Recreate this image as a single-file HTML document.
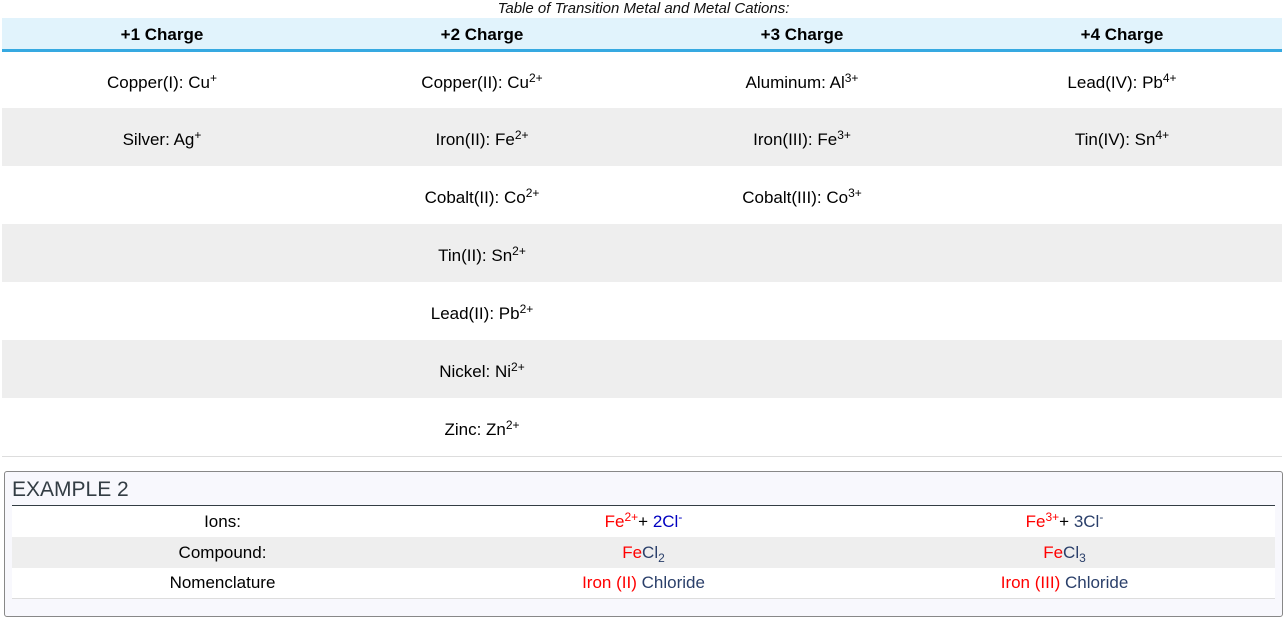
<!DOCTYPE html>
<html><head><style>
body{margin:0;background:#fff;font-family:"Liberation Sans",sans-serif;color:#000;}
.cap{position:absolute;top:0;left:0;width:1287px;text-align:center;font-style:italic;font-size:15px;line-height:18px;color:#111;}
table.t{position:absolute;top:18px;left:2px;width:1280px;border-collapse:collapse;table-layout:fixed;}
.t th{background:#e1f3fc;height:32px;font-size:17px;font-weight:bold;border-bottom:3px solid #36a9e1;padding:3px 0 0 0;box-sizing:border-box;}
.t td{height:58px;text-align:center;font-size:17px;padding:6px 0 0 0;vertical-align:middle;box-sizing:border-box}
.t tr.g td{background:#eeeeee}
.t tr.last td{border-bottom:1px solid #ddd}
sup{font-size:12px;vertical-align:6px;line-height:0}
sub{font-size:12px;vertical-align:-4px;line-height:0}
.box{position:absolute;left:4px;top:471px;width:1277px;height:144px;border:1px solid #888;border-radius:3px;background:#f8f8fd;}
.box h2{margin:0;position:absolute;left:7px;top:6px;font-size:21px;font-weight:normal;color:#333d44;}
table.e{position:absolute;left:7px;top:33px;width:1263px;border-collapse:collapse;table-layout:fixed;border-top:1px solid #333d44;}
.e td{height:31px;text-align:center;font-size:17px;padding:1px 0 0 0;background:#fff;box-sizing:border-box}
.e tr.g td{background:#eeeeee}
.e tr.l td{border-bottom:1px solid #ddd}
.r{color:#f00}.b{color:#0000c0}.n{color:#2a3f6a}
</style></head><body>
<div class="cap">Table of Transition Metal and Metal Cations:</div>
<table class="t">
<tr><th>+1 Charge</th><th>+2 Charge</th><th>+3 Charge</th><th>+4 Charge</th></tr>
<tr><td>Copper(I): Cu<sup>+</sup></td><td>Copper(II): Cu<sup>2+</sup></td><td>Aluminum: Al<sup>3+</sup></td><td>Lead(IV): Pb<sup>4+</sup></td></tr>
<tr class="g"><td>Silver: Ag<sup>+</sup></td><td>Iron(II): Fe<sup>2+</sup></td><td>Iron(III): Fe<sup>3+</sup></td><td>Tin(IV): Sn<sup>4+</sup></td></tr>
<tr><td></td><td>Cobalt(II): Co<sup>2+</sup></td><td>Cobalt(III): Co<sup>3+</sup></td><td></td></tr>
<tr class="g"><td></td><td>Tin(II): Sn<sup>2+</sup></td><td></td><td></td></tr>
<tr><td></td><td>Lead(II): Pb<sup>2+</sup></td><td></td><td></td></tr>
<tr class="g"><td></td><td>Nickel: Ni<sup>2+</sup></td><td></td><td></td></tr>
<tr class="last"><td></td><td>Zinc: Zn<sup>2+</sup></td><td></td><td></td></tr>
</table>
<div class="box"><h2>EXAMPLE 2</h2>
<table class="e">
<tr><td>Ions:</td><td><span class="r">Fe<sup>2+</sup></span>+ <span class="b">2Cl<sup>-</sup></span></td><td><span class="r">Fe<sup>3+</sup></span>+ <span class="n">3Cl<sup>-</sup></span></td></tr>
<tr class="g"><td>Compound:</td><td><span class="r">Fe</span><span class="n">Cl<sub>2</sub></span></td><td><span class="r">Fe</span><span class="n">Cl<sub>3</sub></span></td></tr>
<tr class="l"><td>Nomenclature</td><td><span class="r">Iron (II)</span> <span class="n">Chloride</span></td><td><span class="r">Iron (III)</span> <span class="n">Chloride</span></td></tr>
</table></div>
</body></html>
